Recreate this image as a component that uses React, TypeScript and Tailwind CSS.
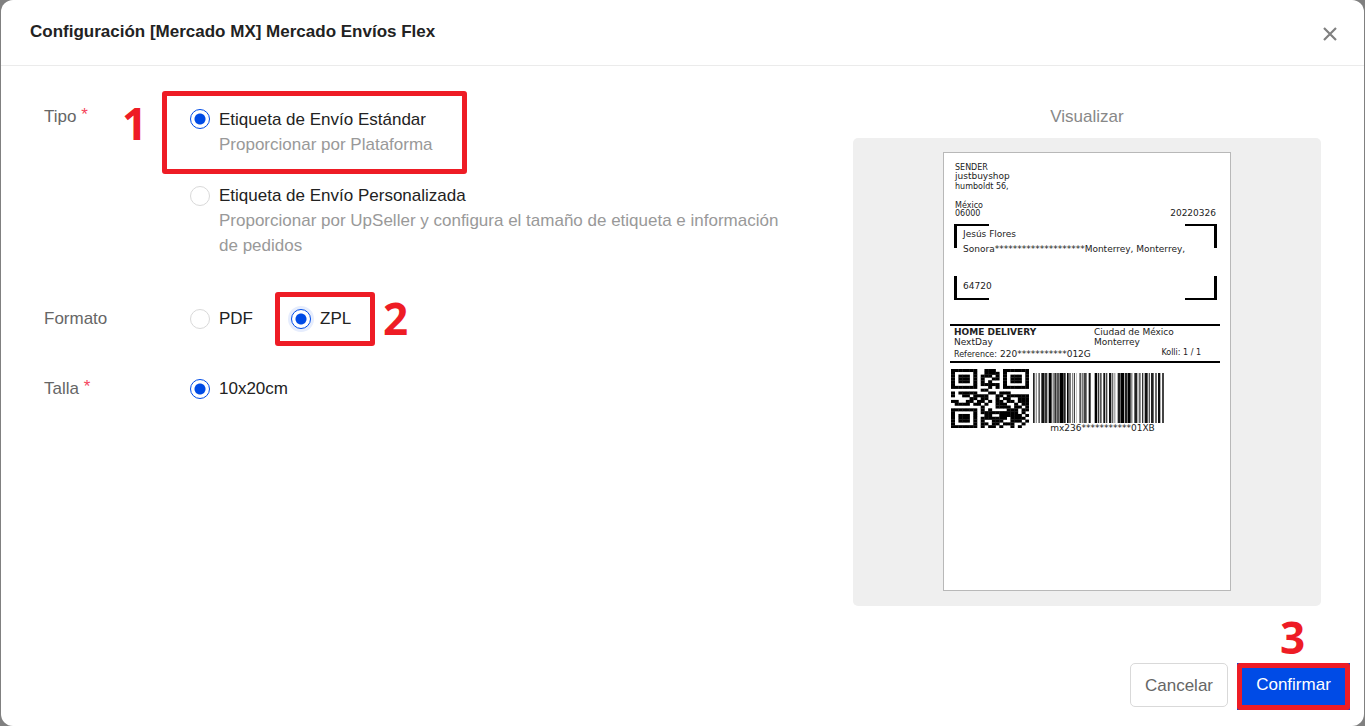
import React from "react";

const QR = [
  "111111100111001111111",
  "100000100111101000001",
  "101110101110101011101",
  "101110101001101011101",
  "101110101010001011101",
  "100000101111101000001",
  "111111100010101111111",
  "000000001100000000000",
  "101111100011011100000",
  "100110111100110111111",
  "000001101100101100111",
  "110011011010110110111",
  "011110110100111001011",
  "000000001000111101101",
  "111111101010000111011",
  "100000101111111111010",
  "101110100110011111101",
  "101110101111111011110",
  "101110101001110011101",
  "100000101101101110010",
  "111111101011010010100",
];

// [start, width, shade]
const BARS: [number, number, string][] = [
  [0, 5, "#222"], [8, 4, "#999"], [16, 5, "#666"], [25, 8, "#111"], [34, 9, "#333"],
  [47, 9, "#000"], [59, 3, "#555"], [64, 5, "#333"], [70, 9, "#555"], [80, 12, "#000"],
  [93, 5, "#222"], [102, 5, "#000"], [109, 4, "#333"], [117, 4, "#888"], [123, 3, "#444"],
  [130, 2, "#aaa"], [139, 6, "#555"], [147, 5, "#777"], [153, 8, "#444"], [167, 6, "#111"],
  [185, 7, "#000"], [194, 4, "#333"], [200, 6, "#555"], [211, 5, "#111"], [218, 5, "#444"],
  [228, 7, "#111"], [237, 4, "#666"], [244, 3, "#888"], [254, 9, "#222"], [264, 9, "#000"],
  [275, 8, "#222"], [284, 9, "#000"], [295, 3, "#555"], [304, 9, "#222"], [317, 6, "#666"],
  [327, 4, "#333"], [335, 9, "#111"], [347, 4, "#555"], [354, 8, "#222"], [367, 4, "#222"],
  [375, 7, "#111"], [387, 6, "#444"],
];

function QrCode() {
  return (
    <svg viewBox="0 0 21 21" preserveAspectRatio="none" className="h-[59px] w-[78px]" aria-hidden="true">
      {QR.flatMap((row, y) =>
        [...row].map((c, x) => (c === "1" ? <rect key={`${x}-${y}`} x={x} y={y} width="1.08" height="1.08" /> : null)),
      )}
    </svg>
  );
}

function Barcode() {
  return (
    <svg viewBox="0 0 393 50" preserveAspectRatio="none" className="h-[50px] w-[131px]" aria-hidden="true">
      {BARS.map(([x, w, shade]) => (
        <rect key={x} x={x} y="0" width={w} height="50" fill={shade} />
      ))}
    </svg>
  );
}

const corner = "absolute border-black";

function ShippingLabel() {
  return (
    <div className="flex h-[439px] w-[288px] flex-col border border-[#b8b8b8] bg-white px-[6px] pt-[10px] font-['DejaVu_Sans',sans-serif] text-[9px] leading-[9px] text-[#222]">
      <div className="flex items-end justify-between pl-[5px] pr-[8px]">
        <div>
          <p className="text-[8px]">SENDER</p>
          <p>justbuyshop</p>
          <p className="mt-px text-[8px]">humboldt 56,</p>
          <p className="mt-[10px] text-[8px]">México</p>
          <p className="text-[8px] leading-[8px]">06000</p>
        </div>
        <p>20220326</p>
      </div>
      <div className="relative ml-1 mr-[7px] mt-[6px] h-[76px] px-[9px] pt-[6px]">
        <span className={`${corner} left-0 top-0 h-[24px] w-[35px] border-l-[3px] border-t-2`} />
        <span className={`${corner} right-0 top-0 h-[24px] w-[32px] border-r-[3px] border-t-2`} />
        <span className={`${corner} bottom-0 left-0 h-[24px] w-[35px] border-b-2 border-l-[3px]`} />
        <span className={`${corner} bottom-0 right-0 h-[24px] w-[32px] border-b-2 border-r-[3px]`} />
        <p>Jesús Flores</p>
        <p className="mt-[6px] whitespace-nowrap">Sonora********************Monterrey, Monterrey,</p>
        <p className="mt-[28px]">64720</p>
      </div>
      <div className="mr-1 mt-[24px] flex h-[39px] justify-between border-y-2 border-black pl-1 pr-[19px] pt-[2px]">
        <div>
          <p className="font-bold">HOME DELIVERY</p>
          <p className="mt-px">NextDay</p>
          <p className="mt-[3px] flex gap-[3px] whitespace-nowrap">
            <span className="text-[8px]">Reference:</span>
            <span>220***********012G</span>
          </p>
        </div>
        <div className="w-[107px]">
          <p>Ciudad de México</p>
          <p className="mt-px">Monterrey</p>
          <p className="mt-px text-right text-[8px]">Kolli: 1 / 1</p>
        </div>
      </div>
      <div className="mt-[6px] flex gap-1 pl-px">
        <QrCode />
        <div className="flex flex-col items-center pt-1">
          <Barcode />
          <p className="mt-px pl-2">mx236***********01XB</p>
        </div>
      </div>
    </div>
  );
}

const radioClass =
  "h-5 w-5 shrink-0 appearance-none rounded-full border border-[#d9d9d9] bg-white checked:border-[#004be6] checked:bg-[radial-gradient(circle,#004be6_5px,transparent_6px)]";

function Highlight({ className }: { className: string }) {
  return <span className={`pointer-events-none absolute rounded-[3px] border-5 border-[#ee1c25] ${className}`} />;
}

function StepNumber({ className, children }: { className: string; children: React.ReactNode }) {
  return (
    <span className={`pointer-events-none absolute font-['Noto_Sans',sans-serif] text-[44px] font-bold leading-[44px] text-[#ee1c25] ${className}`}>
      {children}
    </span>
  );
}

function Required() {
  return <span className="align-[2px] leading-none text-[#f5455c]">*</span>;
}

const legendClass = "float-left w-[146px] shrink-0 text-[#666]";

export default function App() {
  return (
    <div className="min-h-screen bg-[#808080] px-px font-['Liberation_Sans',Arial,sans-serif] text-[17px] leading-[25px] text-[#222]">
      <section role="dialog" aria-labelledby="title" className="flex min-h-screen flex-col rounded-xl bg-white">
        <header className="flex h-[66px] items-center justify-between border-b border-[#ebebeb] pl-[29px] pr-6">
          <h1 id="title" className="pb-[2px] font-bold">Configuración [Mercado MX] Mercado Envíos Flex</h1>
          <button type="button" aria-label="Cerrar" className="flex h-5 w-5 items-center justify-center pt-[2px]">
            <svg viewBox="0 0 14 14" className="h-[14px] w-[14px]" stroke="#808080" strokeWidth="2.2">
              <path d="M1 1l12 12M13 1L1 13" />
            </svg>
          </button>
        </header>
        <main className="flex grow justify-between px-[43px]">
          <form className="flex w-[740px] flex-col pt-[38px]">
            <fieldset className="flex">
              <legend className={legendClass}>
                Tipo <Required />
              </legend>
              <div className="flex flex-col gap-[26px] pt-[3px]">
                <div className="relative flex gap-[9px]">
                  <input type="radio" id="standard" name="type" defaultChecked className={`${radioClass} mt-[2px]`} />
                  <div>
                    <label htmlFor="standard" className="block">Etiqueta de Envío Estándar</label>
                    <p className="text-[#999]">Proporcionar por Plataforma</p>
                  </div>
                  <Highlight className="-left-7 -top-4 h-[83px] w-[305px]" />
                  <StepNumber className="-left-[68px] -top-[6px]">1</StepNumber>
                </div>
                <div className="flex gap-[9px]">
                  <input type="radio" id="custom" name="type" className={`${radioClass} mt-[3px]`} />
                  <div>
                    <label htmlFor="custom" className="block">Etiqueta de Envío Personalizada</label>
                    <p className="text-[#999]">
                      Proporcionar por UpSeller y configura el tamaño de etiqueta e información de pedidos
                    </p>
                  </div>
                </div>
              </div>
            </fieldset>
            <fieldset className="mt-[48px] flex">
              <legend className={legendClass}>Formato</legend>
              <div className="flex gap-[38px]">
                <label className="flex items-center gap-[9px]">
                  <input type="radio" name="format" className={radioClass} />
                  PDF
                </label>
                <label className="relative flex items-center gap-[9px]">
                  <input type="radio" name="format" defaultChecked className={`${radioClass} shadow-[0_0_0_3px_#e6edfd]`} />
                  ZPL
                  <Highlight className="-left-4 -top-[14px] h-[54px] w-[100px]" />
                  <StepNumber className="left-[92px] -top-[10px]">2</StepNumber>
                </label>
              </div>
            </fieldset>
            <fieldset className="mt-[45px] flex">
              <legend className={legendClass}>
                Talla <Required />
              </legend>
              <label className="flex items-center gap-[9px]">
                <input type="radio" name="size" defaultChecked className={radioClass} />
                10x20cm
              </label>
            </fieldset>
          </form>
          <aside className="flex w-[468px] shrink-0 flex-col pt-[38px] text-center text-[#888]">
            <h2>Visualizar</h2>
            <div className="mt-[9px] flex justify-center rounded-[5px] bg-[#efefef] pb-[15px] pt-[14px] text-left">
              <ShippingLabel />
            </div>
          </aside>
        </main>
        <footer className="flex items-start justify-end gap-[9px] pb-4 pr-[14px]">
          <button type="button" className="h-11 w-[98px] rounded-[5px] border border-[#d9d9d9] text-[#666]">Cancelar</button>
          <div className="relative">
            <button type="button" className="h-[47px] w-[113px] bg-[#004be6] pb-1 text-white">Confirmar</button>
            <Highlight className="inset-0" />
            <StepNumber className="left-[43px] -top-[48px]">3</StepNumber>
          </div>
        </footer>
      </section>
    </div>
  );
}
